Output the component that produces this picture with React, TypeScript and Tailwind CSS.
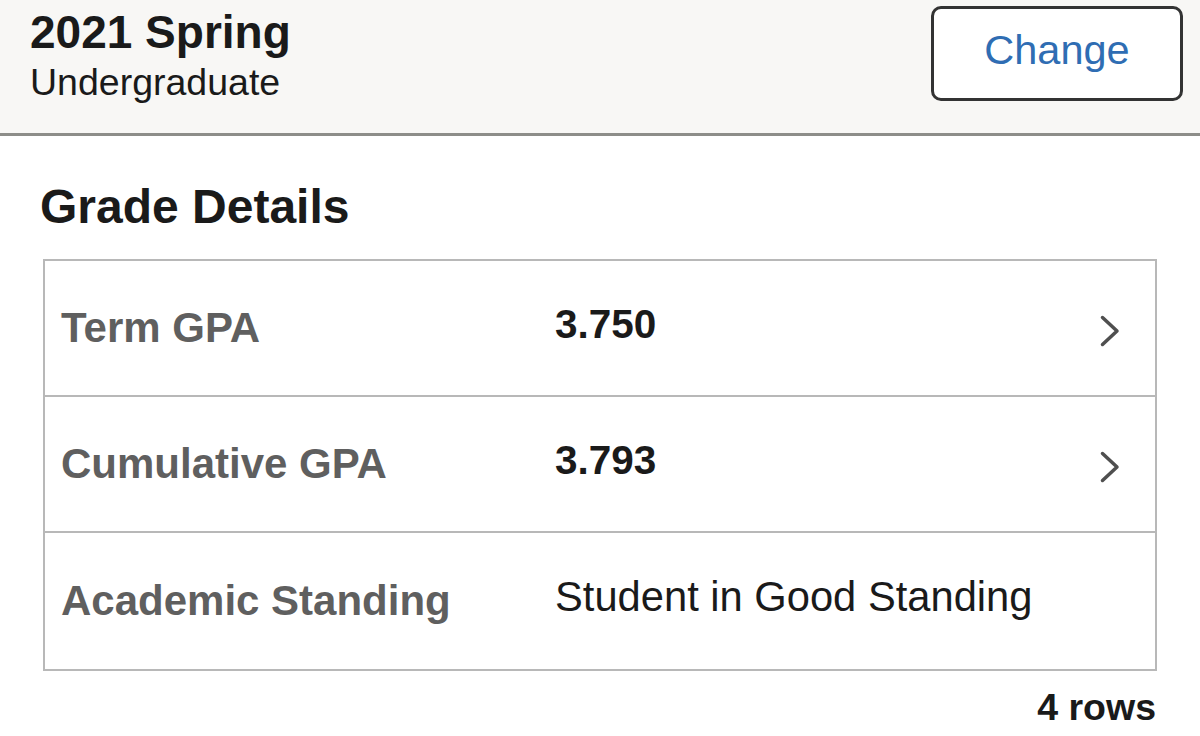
import React from 'react';

type GradeRow = {
  label: string;
  value: string;
  bold: boolean;
  link: boolean;
};

const rows: GradeRow[] = [
  { label: 'Term GPA', value: '3.750', bold: true, link: true },
  { label: 'Cumulative GPA', value: '3.793', bold: true, link: true },
  { label: 'Academic Standing', value: 'Student in Good Standing', bold: false, link: false },
];

function Chevron() {
  return (
    <svg className="w-[20px] h-[32px] mt-[6px]" viewBox="0 0 20 32" fill="none" stroke="#4f4f4f" strokeWidth={3.5} strokeLinecap="round" strokeLinejoin="round">
      <polyline points="2.5,2.5 17,16 2.5,29.5" />
    </svg>
  );
}

export default function App() {
  return (
    <div className="min-h-screen bg-white text-[#1a1a1a] font-['Liberation_Sans',Arial,sans-serif]">
      {/* term header */}
      <div className="h-[136px] bg-[#f8f7f5] border-b-[3px] border-[#8d8d89] flex items-start justify-between pl-[30px] pr-[17px]">
        <div className="pt-[6px]">
          <h1 className="text-[46px] leading-[52px] font-bold">2021 Spring</h1>
          <p className="text-[37.5px] leading-[44px] mt-[2px]">Undergraduate</p>
        </div>
        <button className="mt-[6px] w-[252px] h-[95px] bg-white border-[3px] border-[#333333] rounded-[10px] flex items-center justify-center pb-[8px]">
          <span className="text-[41.5px] leading-[48px] text-[#2f6db3]">Change</span>
        </button>
      </div>

      <div className="px-[43px]">
        <h2 className="mt-[43px] -ml-[3px] text-[48px] leading-[56px] font-bold">Grade Details</h2>

        <div className="mt-[24px] border-2 border-[#b8b8b8] divide-y-2 divide-[#b8b8b8] bg-white">
          {rows.map((row, index) => (
            <div key={index} className="h-[136px] flex items-center pl-[16px] pr-[35px]">
              <div className="w-[494px] text-[42px] leading-[48px] font-bold text-[#5f5f5f]">{row.label}</div>
              <div className={`mb-[8px] leading-[48px] ${row.bold ? 'font-bold text-[40.5px]' : 'text-[41.7px]'}`}>
                {row.value}
              </div>
              {row.link && (
                <div className="ml-auto">
                  <Chevron />
                </div>
              )}
            </div>
          ))}
        </div>

        <div className="mt-[14px] text-right text-[37.5px] leading-[44px] font-bold pr-[1px]">4 rows</div>
      </div>
    </div>
  );
}
